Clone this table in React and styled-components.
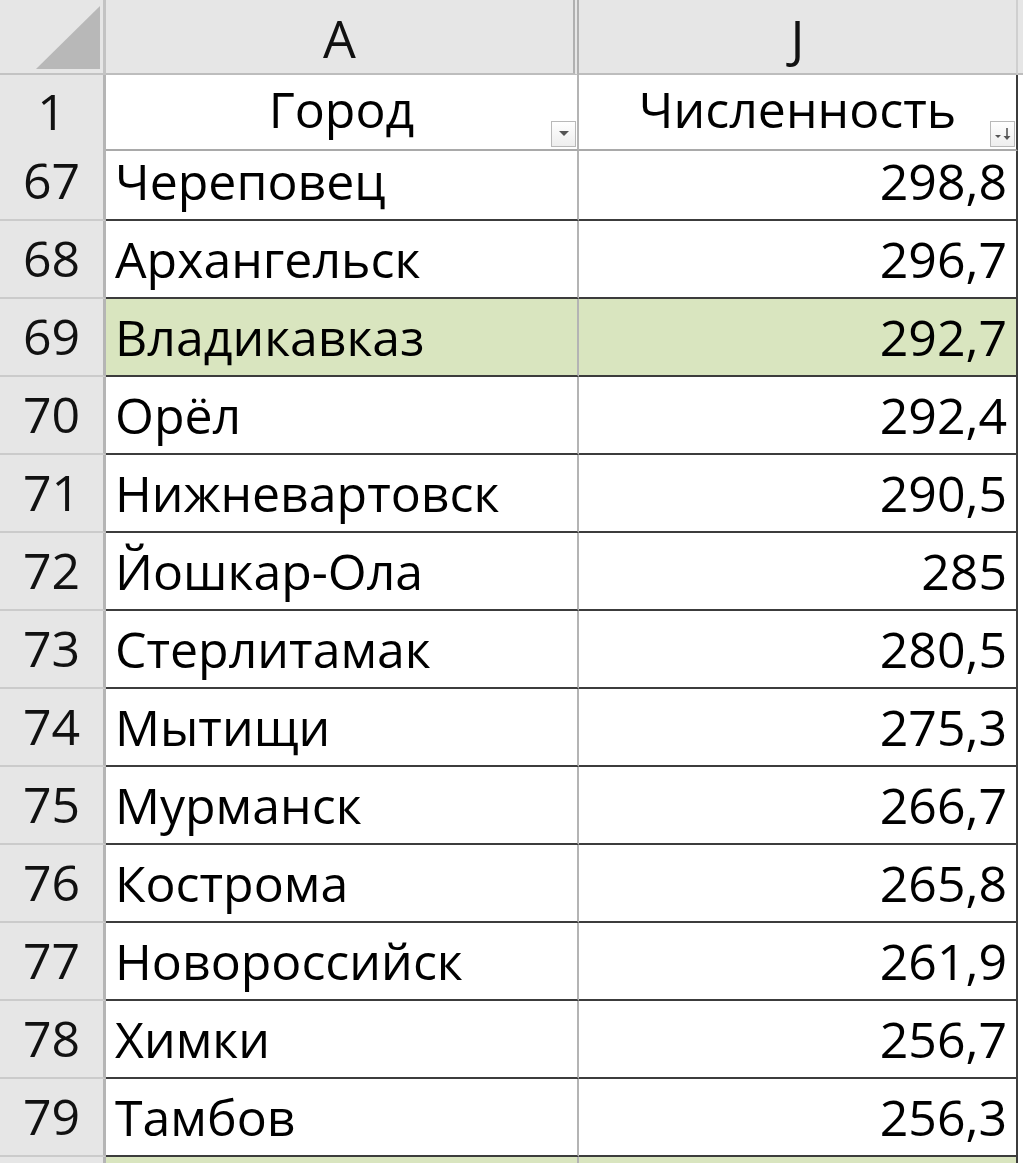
import React from 'react';
import styled, { createGlobalStyle } from 'styled-components';

const GlobalStyle = createGlobalStyle`
  html, body {
    margin: 0;
    padding: 0;
    background: #ffffff;
  }
  body {
    font-family: "Open Sans", "Noto Sans", sans-serif;
    color: #000;
    overflow: hidden;
  }
`;

const COLS = '106px 473px 439px 1fr';

const Sheet = styled.div`
  width: 1023px;
  height: 1163px;
  overflow: hidden;
  display: flex;
  flex-direction: column;
`;

const Row = styled.div`
  display: grid;
  grid-template-columns: ${COLS};
  height: ${p => p.$h}px;
  flex: none;
`;

const Corner = styled.div`
  background: #e6e6e6;
  border-right: 3px solid #c3c3c3;
  border-bottom: 2px solid #c3c3c3;
  box-sizing: border-box;
  display: flex;
  align-items: flex-end;
  justify-content: flex-end;
  padding: 0 3px 4px 0;
`;

const ColHead = styled.div`
  background: #e6e6e6;
  border-bottom: 2px solid #bdbdbd;
  border-right: ${p => (p.$hiddenAfter ? '6px double #b0b0b0' : '2px solid #cfcfcf')};
  box-sizing: border-box;
  display: flex;
  align-items: center;
  justify-content: center;
  font-size: 52px;
  color: #111;
  padding-top: 2px;
`;

const ColFill = styled.div`
  background: #e6e6e6;
  border-bottom: 2px solid #bdbdbd;
`;

const RowNum = styled.div`
  background: #e6e6e6;
  border-right: 3px solid #b5b5b5;
  border-bottom: 2px solid #cbcbcb;
  box-sizing: border-box;
  display: flex;
  align-items: center;
  justify-content: center;
  font-size: 50px;
  color: #111;
  padding-bottom: 2px;
`;

const HeadCell = styled.div`
  position: relative;
  background: #ffffff;
  border-bottom: 2px solid #a9a9a9;
  border-right: ${p => (p.$last ? '2px solid #3c3c3c' : '2px solid #b4b4b4')};
  box-sizing: border-box;
  display: flex;
  align-items: center;
  justify-content: center;
  font-size: 50px;
  padding-bottom: 6px;
`;

const Cell = styled.div`
  background: ${p => (p.$hl ? '#d9e5bf' : '#ffffff')};
  border-bottom: 2px solid #3c3c3c;
  border-right: ${p => (p.$last ? '2px solid #3c3c3c' : '2px solid #b4b4b4')};
  box-sizing: border-box;
  display: flex;
  align-items: center;
  justify-content: ${p => (p.$num ? 'flex-end' : 'flex-start')};
  padding: 0 9px 0 9px;
  font-size: 50px;
  white-space: nowrap;
`;

const Blank = styled.div`
  background: #ffffff;
`;

const FilterBtn = styled.div`
  position: absolute;
  right: 1px;
  bottom: 2px;
  width: 25px;
  height: 26px;
  box-sizing: border-box;
  border: 1px solid #b9b9b9;
  background: linear-gradient(#ffffff, #eeeeee);
  display: flex;
  align-items: center;
  justify-content: center;
`;

const CornerMark = () => (
  <svg width="64" height="63" viewBox="0 0 64 63">
    <polygon points="0,63 64,63 64,0" fill="#b8b8b8" />
  </svg>
);

const Filter = ({ sorted }) => (
  <FilterBtn>
    {sorted ? (
      <svg width="20" height="18" viewBox="0 0 20 18">
        <polygon points="2,10 8,10 5,13" fill="#555" />
        <line x1="14" y1="3" x2="14" y2="14" stroke="#555" strokeWidth="1.6" />
        <polygon points="10.5,11 17.5,11 14,15" fill="#555" />
      </svg>
    ) : (
      <svg width="14" height="10" viewBox="0 0 14 10">
        <polygon points="2,2 12,2 7,7" fill="#555" />
      </svg>
    )}
  </FilterBtn>
);

const data = [
  [67, 'Череповец', '298,8'],
  [68, 'Архангельск', '296,7'],
  [69, 'Владикавказ', '292,7', true],
  [70, 'Орёл', '292,4'],
  [71, 'Нижневартовск', '290,5'],
  [72, 'Йошкар-Ола', '285'],
  [73, 'Стерлитамак', '280,5'],
  [74, 'Мытищи', '275,3'],
  [75, 'Мурманск', '266,7'],
  [76, 'Кострома', '265,8'],
  [77, 'Новороссийск', '261,9'],
  [78, 'Химки', '256,7'],
  [79, 'Тамбов', '256,3'],
];

export default function App() {
  return (
    <>
      <GlobalStyle />
      <Sheet>
        <Row $h={75}>
          <Corner><CornerMark /></Corner>
          <ColHead $hiddenAfter>A</ColHead>
          <ColHead>J</ColHead>
          <ColFill />
        </Row>
        <Row $h={68}>
          <RowNum>1</RowNum>
          <HeadCell>Город<Filter /></HeadCell>
          <HeadCell $last>Численность<Filter sorted /></HeadCell>
          <Blank />
        </Row>
        {data.map(([n, city, pop, hl]) => (
          <Row $h={78} key={n}>
            <RowNum>{n}</RowNum>
            <Cell $hl={hl}>{city}</Cell>
            <Cell $hl={hl} $num $last>{pop}</Cell>
            <Blank />
          </Row>
        ))}
        <Row $h={40}>
          <RowNum />
          <Cell $hl />
          <Cell $hl $num $last />
          <Blank />
        </Row>
      </Sheet>
    </>
  );
}
